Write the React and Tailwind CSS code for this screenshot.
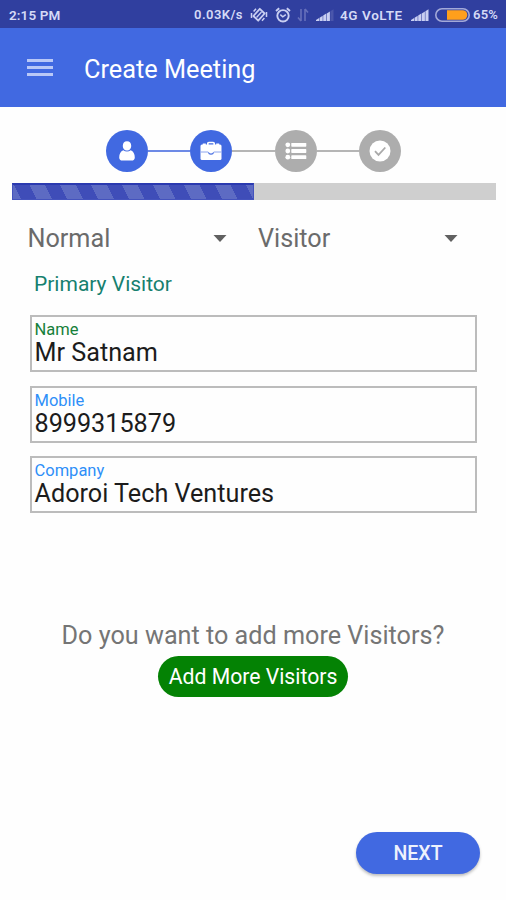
import React from 'react';

/* ── Status bar icons ── */
function VibrateOffIcon() {
  return (
    <svg width="18" height="16" viewBox="0 0 18 16" fill="none" stroke="#c9cff2" strokeWidth="1.8" strokeLinejoin="round">
      <path d="M9.800 1.800l4.800 4.700-6.400 7.200-4.800-4.700z" />
      <path d="M3.600 4.500l2.400-2.700M12 13.700l2.400-2.700" strokeWidth="1.500" />
      <path d="M1.500 6v5M16.500 5v5" strokeWidth="1.500" />
      <path d="M6.500 10.500l5-5.500" strokeWidth="1.300" />
    </svg>
  );
}

function AlarmIcon() {
  return (
    <svg width="16" height="16" viewBox="0 0 16 16" fill="none" stroke="#c9cff2" strokeWidth="1.9">
      <circle cx="8" cy="8.800" r="5.700" />
      <path d="M1 4l3.200-2.800M15 4l-3.200-2.800" />
      <path d="M5.300 7.600l2.500 2.200 3-2.200" strokeWidth="1.500" />
    </svg>
  );
}

function DataArrowsIcon() {
  return (
    <svg width="12" height="14" viewBox="0 0 12 14" fill="none" stroke="#6670bb" strokeWidth="1.6">
      <path d="M4 1v12M4 13L1 9.5M8 13V1M8 1l3 3.5" />
    </svg>
  );
}

function SignalIcon({ bars }) {
  return (
    <svg width="18" height="12" viewBox="0 0 18 12">
      {[0, 1, 2, 3, 4].map((i) => (
        <path
          key={i}
          d={`M${i * 3.6} ${11 - i * 2.2}L${i * 3.6 + 3.1} ${9 - i * 2.2}V12H${i * 3.6}z`}
          fill={i < bars ? '#c9cff2' : '#4a56ab'}
        />
      ))}
    </svg>
  );
}

function BatteryIcon() {
  return (
    <svg width="35" height="14" viewBox="0 0 35 14">
      <rect x="0.8" y="0.8" width="33.4" height="12.4" rx="6.2" fill="none" stroke="#a3a9d8" strokeWidth="1.6" />
      <path d="M12 2.200h15.500a4.800 4.800 0 0 1 0 9.600H12z" fill="#ff9f1c" />
    </svg>
  );
}

function StatusBar() {
  return (
    <div className="flex h-7 items-center bg-[#303f9f] pt-0.5 pl-[9px] text-[13px] font-semibold text-[#d5daf6]">
      <span className="w-[185px] shrink-0 text-[13.500px] tracking-[0.1px]">2:15 PM</span>
      <span className="w-[56px] shrink-0 tracking-[0.450px]">0.03K/s</span>
      <span className="shrink-0"><VibrateOffIcon /></span>
      <span className="ml-[7px] shrink-0"><AlarmIcon /></span>
      <span className="ml-[6px] shrink-0"><DataArrowsIcon /></span>
      <span className="ml-[7px] shrink-0"><SignalIcon bars={4} /></span>
      <span className="ml-[6px] w-[71px] shrink-0 text-[13.500px] tracking-[0.600px] whitespace-nowrap">4G VoLTE</span>
      <span className="shrink-0"><SignalIcon bars={5} /></span>
      <span className="ml-[6px] shrink-0"><BatteryIcon /></span>
      <span className="ml-[3px] tracking-[0.200px]">65%</span>
    </div>
  );
}

function AppBar() {
  return (
    <header className="flex h-[79px] items-center bg-[#4169e1] pl-[27px]">
      <button type="button" aria-label="Menu" className="flex w-[26px] flex-col gap-1">
        <span className="h-[3px] bg-[#b9c8f7]" />
        <span className="h-[3px] bg-[#b9c8f7]" />
        <span className="h-[3px] bg-[#b9c8f7]" />
      </button>
      <h1 className="ml-[31px] pt-1 text-[25.300px] leading-8 text-white">Create Meeting</h1>
    </header>
  );
}

/* ── Stepper ── */
function PersonIcon() {
  return (
    <svg width="22" height="22" viewBox="0 0 22 22" fill="#fff">
      <path d="M11 1.200c2.800 0 4.200 1.800 4.200 4.500S13.500 10.600 11 10.600 6.800 8.400 6.800 5.700 8.200 1.200 11 1.200z" />
      <path d="M7.300 10.200c2.200 1.700 5.200 1.700 7.400 0 2.700 1.100 4.100 3.600 4.100 7.200 0 2-1.200 3.200-3.200 3.200H6.400c-2 0-3.200-1.200-3.200-3.200 0-3.600 1.400-6.100 4.100-7.200z" />
    </svg>
  );
}

function BriefcaseIcon() {
  return (
    <svg width="22" height="20" viewBox="0 0 22 20">
      <path d="M7.800 4V2.600c0-.7.400-1.100 1.100-1.100h4.200c.7 0 1.100.4 1.100 1.100V4" fill="none" stroke="#fff" strokeWidth="1.700" />
      <path d="M2.800 4V2.600h3V4zM16.200 4V2.600h3V4z" fill="#fff" />
      <rect x="0.500" y="3.600" width="21" height="15.400" rx="1.500" fill="#fff" />
      <path d="M0.500 11h7.700M13.800 11h7.700" stroke="#8ea6ee" strokeWidth="1" />
      <path d="M8.400 11.300c.6 2.400 4.600 2.400 5.200 0" fill="none" stroke="#4169e1" strokeWidth="1.100" />
    </svg>
  );
}

function ListIcon() {
  return (
    <svg width="22" height="18" viewBox="0 0 22 18" fill="#fff">
      {[0, 6.2, 12.4].map((y) => (
        <g key={y}>
          <circle cx="2.800" cy={y + 2.8} r="2.400" />
          <rect x="6.300" y={y + 0.9} width="15" height="3.800" rx="0.600" />
        </g>
      ))}
    </svg>
  );
}

function CheckIcon() {
  return (
    <svg width="22" height="22" viewBox="0 0 22 22">
      <circle cx="11" cy="11" r="10.500" fill="#fff" />
      <path d="M6 11.200l3.500 3.700 6.800-7.400" fill="none" stroke="#aaa" strokeWidth="1.800" />
    </svg>
  );
}

const steps = [
  { id: 'person', icon: PersonIcon, active: true },
  { id: 'meeting', icon: BriefcaseIcon, active: true },
  { id: 'list', icon: ListIcon, active: false },
  { id: 'done', icon: CheckIcon, active: false },
];

function Stepper() {
  return (
    <div className="flex items-center pt-[23px] pl-[106px]">
      {steps.map(({ id, icon: Icon, active }, i) => (
        <React.Fragment key={id}>
          {i > 0 && <span className={`h-[2px] w-[42.300px] ${active ? 'bg-[#6d8ae6]' : 'bg-[#b5b5b5]'}`} />}
          <span className={`flex size-[42px] items-center justify-center rounded-full ${active ? 'bg-[#4169e1]' : 'bg-[#adadad]'}`}>
            <Icon />
          </span>
        </React.Fragment>
      ))}
    </div>
  );
}

function ProgressBar() {
  return (
    <div className="mt-[11px] mr-[10px] ml-3 h-[17px] bg-[#cfcfcf]">
      <div className="h-full w-1/2 border border-t-2 border-[#4453bd] border-t-[#2b3ab0] bg-[repeating-linear-gradient(63.4deg,#5d6bc3_0px,#5d6bc3_7px,#3f4db8_7px,#3f4db8_20.800px,#5d6bc3_20.800px,#5d6bc3_27.700px)]" />
    </div>
  );
}

function Dropdown({ value }) {
  return (
    <button type="button" className="flex w-[230.500px] items-center justify-between pr-[31px] text-[25.200px] leading-[34px] text-[#6b6b6b]">
      {value}
      <svg width="14" height="7" viewBox="0 0 14 7" className="-mt-0.5" fill="#616161"><path d="M0.500 0h13L7 7z" /></svg>
    </button>
  );
}

function Field({ label, value, labelClass }) {
  return (
    <div className="h-[57px] border-2 border-[#bcbcbc] px-[2.500px] pt-[3px]">
      <p className={`text-[16.500px] leading-5 ${labelClass}`}>{label}</p>
      <p className="text-[25.200px] leading-[25px] text-[#1c1c1c]">{value}</p>
    </div>
  );
}

export default function App() {
  return (
    <div className="flex h-[900px] w-[506px] flex-col bg-[#fefefe] font-['Roboto',sans-serif]">
      <StatusBar />
      <AppBar />
      <Stepper />
      <ProgressBar />

      <main className="flex flex-1 flex-col">
        <div className="flex pt-[22px] pl-[27.500px]">
          <Dropdown value="Normal" />
          <Dropdown value="Visitor" />
        </div>
        <h2 className="mt-[14px] pl-[34px] text-[21px] leading-[28px] text-[#16806f]">Primary Visitor</h2>

        <div className="mt-[17px] mr-[29px] ml-[30px] flex flex-col gap-[13.500px]">
          <Field label="Name" value="Mr Satnam" labelClass="text-[#16803a]" />
          <Field label="Mobile" value="8999315879" labelClass="text-[#2e8ff8]" />
          <Field label="Company" value="Adoroi Tech Ventures" labelClass="text-[#2e8ff8]" />
        </div>

        <div className="mt-[107px] flex flex-col items-center">
          <p className="text-[25.200px] leading-[32px] text-[#757575]">Do you want to add more Visitors?</p>
          <button type="button" className="mt-[4px] h-[41px] w-[190px] rounded-full bg-[#048204] pt-px text-[21.200px] text-white">
            Add More Visitors
          </button>
        </div>

        <button type="button" className="mt-auto mr-[26px] mb-[26px] h-[42px] w-[124px] self-end rounded-full bg-[#4169e1] pt-0.5 text-[19.500px] font-medium text-[#eef2fd] shadow-[0_2px_3px_rgba(0,0,0,0.250)]">
          NEXT
        </button>
      </main>
    </div>
  );
}
